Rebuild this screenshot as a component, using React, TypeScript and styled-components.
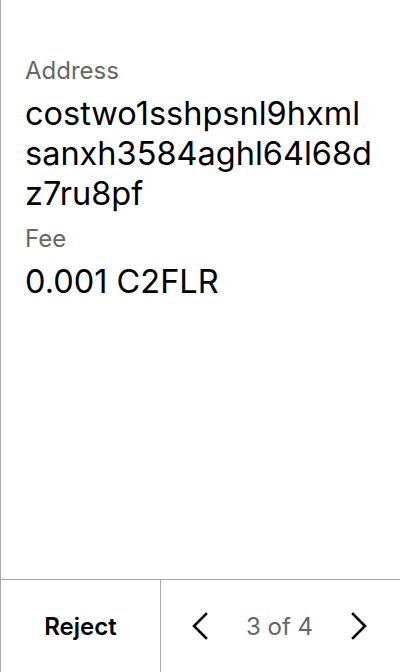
import React from "react";
import styled, { createGlobalStyle } from "styled-components";

const Global = createGlobalStyle`
  html, body { margin: 0; padding: 0; background: #fff; }
  body { font-family: Inter, "Noto Sans", sans-serif; }
`;

const Screen = styled.div`
  box-sizing: border-box;
  width: 400px;
  height: 672px;
  border-left: 1px solid #a6a6a6;
  display: flex;
  flex-direction: column;
  background: #fff;
`;

const Content = styled.div`
  flex: 1;
  padding: 57px 24px 0 24px;
  display: flex;
  flex-direction: column;
`;

const Label = styled.div`
  font-size: 24px;
  line-height: 28px;
  color: #666;
  margin-bottom: 9px;
`;

const Value = styled.div`
  font-size: 32.5px;
  line-height: 40px;
  color: #000;
  word-break: break-all;
  margin-bottom: 11px;
`;

const Footer = styled.div`
  height: 92px;
  border-top: 1px solid #a6a6a6;
  display: flex;
`;

const RejectButton = styled.div`
  width: 159px;
  border-right: 1px solid #a6a6a6;
  display: flex;
  align-items: center;
  justify-content: center;
  font-size: 24px;
  font-weight: 600;
  color: #000;
`;

const Pager = styled.div`
  flex: 1;
  display: flex;
  align-items: center;
  justify-content: space-between;
  padding: 0 29px 0 27px;
`;

const PageText = styled.span`
  font-size: 24px;
  color: #666;
`;

const Chevron = ({ dir }: { dir: "left" | "right" }) => (
  <svg width="24" height="28" viewBox="0 0 24 28" fill="none">
    <path
      d={dir === "left" ? "M18 2 L6 14 L18 26" : "M6 2 L18 14 L6 26"}
      stroke="#000"
      strokeWidth="2.6"
      strokeLinecap="square"
    />
  </svg>
);

export default function App() {
  return (
    <>
      <Global />
      <Screen>
        <Content>
          <Label>Address</Label>
          <Value>costwo1sshpsnl9hxmlsanxh3584aghl64l68dz7ru8pf</Value>
          <Label>Fee</Label>
          <Value>0.001 C2FLR</Value>
        </Content>
        <Footer>
          <RejectButton>Reject</RejectButton>
          <Pager>
            <Chevron dir="left" />
            <PageText>3 of 4</PageText>
            <Chevron dir="right" />
          </Pager>
        </Footer>
      </Screen>
    </>
  );
}
